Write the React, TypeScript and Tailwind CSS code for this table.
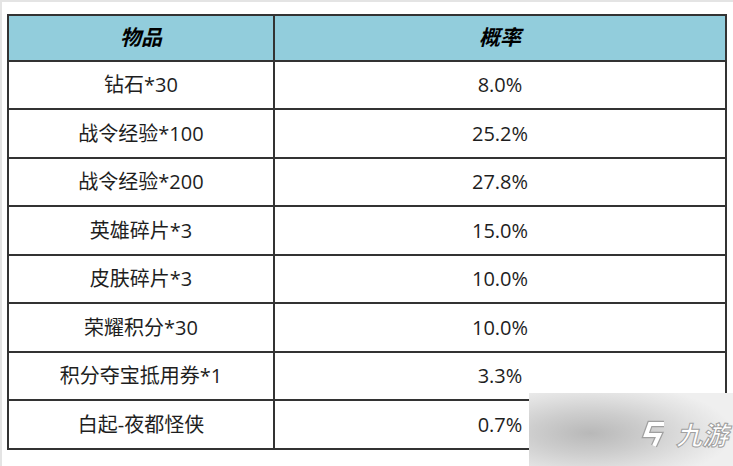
import React from 'react';

const rows = [
  { name: '钻石*30', rate: '8.0%', h: 'h-[48px]' },
  { name: '战令经验*100', rate: '25.2%', h: 'h-[49px]' },
  { name: '战令经验*200', rate: '27.8%', h: 'h-[48px]' },
  { name: '英雄碎片*3', rate: '15.0%', h: 'h-[49px]' },
  { name: '皮肤碎片*3', rate: '10.0%', h: 'h-[48px]' },
  { name: '荣耀积分*30', rate: '10.0%', h: 'h-[49px]' },
  { name: '积分夺宝抵用券*1', rate: '3.3%', h: 'h-[48px]' },
  { name: '白起-夜都怪侠', rate: '0.7%', h: 'h-[47px]' },
];

const font = "font-['Open_Sans','Noto_Sans_CJK_SC',sans-serif]";

const Watermark = () => (
  <div className="absolute left-[527px] top-[391px] right-0 bottom-0 bg-[radial-gradient(ellipse_70%_70%_at_30%_55%,#b8b8b8_0%,#cdcdcd_40%,#e2e2e2_75%,#efefef_100%)] flex items-center justify-end pr-[3px] pt-[8px] gap-[9px]">
    <svg width="26" height="28" viewBox="0 0 26 28">
      <path d="M23 4 L9 4 L5 15 L18 15 L13 26" fill="none" stroke="#a0a0a0" strokeWidth="6.5" strokeLinejoin="miter" />
      <path d="M23 4 L9 4 L5 15 L18 15 L13 26" fill="none" stroke="#ffffff" strokeWidth="4" strokeLinejoin="miter" />
    </svg>
    <span className="font-['Noto_Sans_CJK_SC',sans-serif] text-[26px] leading-none font-bold italic text-white [-webkit-text-stroke:1px_#a0a0a0] pr-[2px]">
      九游
    </span>
  </div>
);

export default function App() {
  return (
    <div className={`relative w-[733px] h-[466px] bg-white border-t-2 border-l-2 border-[#e4e4e4] pl-[5px] pt-[12px] overflow-hidden ${font}`}>
      <div className="w-[720px] border-2 border-[#333333]">
        <div className="flex h-[46px] bg-[#92cddc] border-b-2 border-[#333333] text-[21px] font-bold italic text-black">
          <div className="w-[266px] flex items-center justify-center border-r-2 border-[#333333]">物品</div>
          <div className="flex-1 flex items-center justify-center">概率</div>
        </div>
        {rows.map((r, i) => (
          <div
            key={r.name}
            className={`flex ${r.h} text-[20px] text-[#1e1e1e] ${i < rows.length - 1 ? 'border-b-2 border-[#333333]' : ''}`}
          >
            <div className="w-[266px] flex items-center justify-center border-r-2 border-[#333333]">{r.name}</div>
            <div className="flex-1 flex items-center justify-center">{r.rate}</div>
          </div>
        ))}
      </div>
      <Watermark />
    </div>
  );
}
